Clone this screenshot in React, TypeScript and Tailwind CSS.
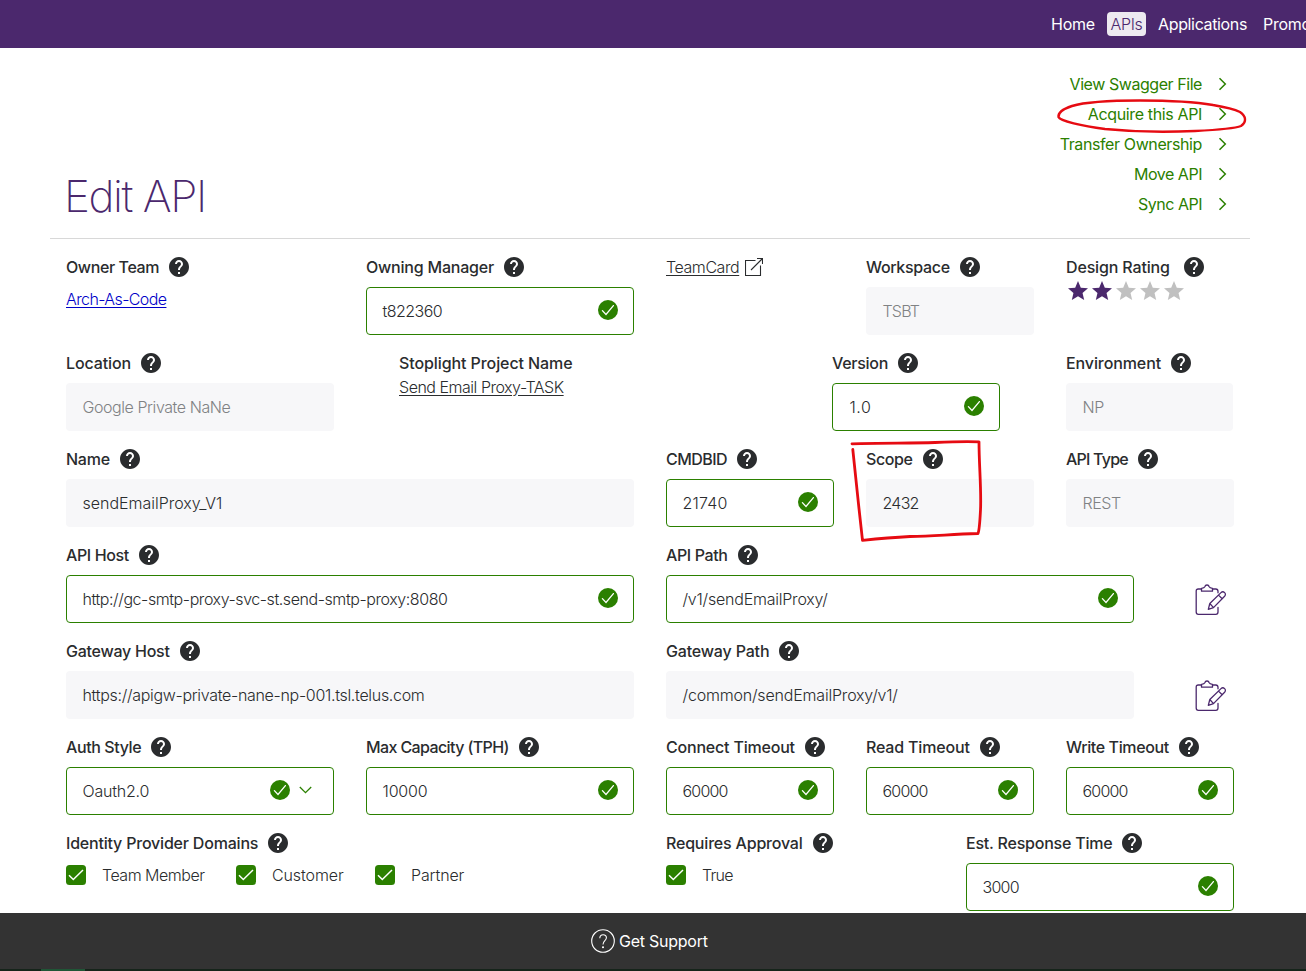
import React from "react";
import { MdHelp, MdStar } from "react-icons/md";

function Help() {
  return <MdHelp className="size-6 shrink-0 text-[#2a2c2e]" />;
}

function CheckCircle() {
  return (
    <svg viewBox="0 0 20 20" className="mb-[3px] size-5 shrink-0">
      <circle cx="10" cy="10" r="10" fill="#2b8000" />
      <path d="M4.400 10.600l3.600 3.800L15.400 5.600" fill="none" stroke="#fff" strokeWidth="1.300" strokeLinecap="round" />
    </svg>
  );
}

function Label({ text, tight = "tracking-[0px]", gap = "gap-2", help = true }: { text: string; tight?: string; gap?: string; help?: boolean }) {
  return (
    <div className={`flex h-6 items-center ${gap} text-base font-medium text-[#2a2c2e]`}>
      <span className={`whitespace-nowrap ${tight}`}>{text}</span>
      {help && <Help />}
    </div>
  );
}

type FieldProps = {
  label: string;
  value: string;
  kind?: "valid" | "plain" | "disabled" | "select";
  labelTight?: string;
  tight?: string;
};

const boxes = {
  valid: "border border-[#2b8000] bg-white text-[#2a2c2e]",
  select: "border border-[#2b8000] bg-white text-[#2a2c2e]",
  plain: "border border-transparent bg-[#f7f7f9] text-[#2a2c2e]",
  disabled: "border border-transparent bg-[#f7f7f9] text-[#808284]",
};

function Field({ label, value, kind = "valid", labelTight, tight = "tracking-[0px]" }: FieldProps) {
  return (
    <div className="flex flex-col gap-2">
      <Label text={label} tight={labelTight} />
      <div className={`flex h-12 items-center justify-between rounded pl-[15.500px] ${kind === "select" ? "pr-[21px]" : "pr-[15px]"} ${boxes[kind]}`}>
        <span className={`whitespace-nowrap font-[270] ${tight}`}>{value}</span>
        {kind === "valid" && <CheckCircle />}
        {kind === "select" && (
          <span className="flex items-center gap-[9px]">
            <CheckCircle />
            <svg viewBox="0 0 13 8" className="mb-[2px] h-2 w-[13px]">
              <path d="M.8 1l5.700 5.600L12.200 1" fill="none" stroke="#2b8000" strokeWidth="1.300" />
            </svg>
          </span>
        )}
      </div>
    </div>
  );
}

function EditIcon() {
  return (
    <div className="flex justify-center pt-[41px]">
      <svg viewBox="0 0 32 32" className="ml-[-9px] mr-[-31px] size-8 shrink-0" fill="none" stroke="#4b286d" strokeWidth="1.300" strokeLinejoin="round" strokeLinecap="round">
        <path d="M6.500 5H3.200C1.900 5 1.200 5.700 1.200 7v21c0 1.600.7 2.300 2.200 2.300h17.400c1.500 0 2.200-.7 2.200-2.300v-4.500M17.500 5h3.200c1.500 0 2.300.8 2.300 2.300v1.500" />
        <path d="M6.500 7.200V4.300c1.800-.2 2.900-.6 3.300-1.600.3-1 1.200-1.700 2.200-1.700s1.900.7 2.200 1.700c.4 1 1.500 1.400 3.300 1.600v2.900z" />
        <path d="M13.300 25.300l1.500-5.800L26 8.600c1.100-1.100 2.600-1 3.600 0s1.100 2.500 0 3.600L18.500 23.600zM14.800 19.500l3.700 4.100M23.500 11.100l3.700 3.700" />
      </svg>
    </div>
  );
}

function Check({ text, tight }: { text: string; tight: string }) {
  return (
    <div className="flex items-center gap-4">
      <svg viewBox="0 0 20 20" className="size-5 shrink-0">
        <rect width="20" height="20" rx="3.500" fill="#2b8000" />
        <path d="M3 10.200l4.300 4.300L17 5" fill="none" stroke="#fff" strokeWidth="1.500" />
      </svg>
      <span className={`whitespace-nowrap font-[270] ${tight}`}>{text}</span>
    </div>
  );
}

const actions = [
  { text: "View Swagger File", tight: "tracking-[-0.44px]" },
  { text: "Acquire this API", tight: "tracking-[-0.36px]" },
  { text: "Transfer Ownership", tight: "tracking-[-0.39px]" },
  { text: "Move API", tight: "tracking-[-0.48px]" },
  { text: "Sync API", tight: "tracking-[-0.5px]" },
];

const row = "grid grid-cols-12 [&>*]:px-4";

export default function App() {
  return (
    <div className="relative flex h-[971px] w-[1306px] flex-col overflow-hidden bg-white font-['Inter','Liberation_Sans',sans-serif] text-base text-[#2a2c2e]">
      <header className="flex h-12 shrink-0 items-center bg-[#4b286d] pl-[1051px] whitespace-nowrap text-white">
        <span className="w-14 shrink-0 tracking-[-0.25px]">Home</span>
        <span className="mr-3 flex h-6 w-[39px] shrink-0 items-center justify-center rounded bg-[#edeaf0] font-light tracking-[-0.3px] text-[#4b286d]">APIs</span>
        <span className="w-[105px] shrink-0 tracking-[-0.35px]">Applications</span>
        <span className="tracking-[-0.3px]">Promotions</span>
      </header>

      <main className="ml-[50px] flex w-[1200px] grow flex-col">
        <div className="flex h-[191px] items-end justify-between border-b border-[#d8d8d8] pr-[23px] pb-[19px] pl-[14px]">
          <h1 className="mb-[-3px] text-[44px] leading-[52px] font-extralight tracking-[-1.450px] text-[#4b286d]">Edit API</h1>
          <nav className="flex flex-col text-[#2b8000]">
            {actions.map((a) => (
              <a key={a.text} className="flex h-[30px] items-center justify-end gap-4 whitespace-nowrap">
                <span className={a.tight}>{a.text}</span>
                <svg viewBox="0 0 9 14" className="h-3.5 w-[9px]" fill="none" stroke="currentColor" strokeWidth="1.500">
                  <path d="M1.500 1.200L7.300 7l-5.800 5.800" />
                </svg>
              </a>
            ))}
          </nav>
        </div>

        <div className="flex flex-col gap-4 pt-4">
          <div className={row}>
            <div className="col-span-3">
              <Label text="Owner Team" tight="tracking-[-0.4px]" />
              <a className="mt-2 block w-fit font-[270] tracking-[-0.6px] text-[#0000c8] underline underline-offset-2">Arch-As-Code</a>
            </div>
            <div className="col-span-3"><Field label="Owning Manager" labelTight="tracking-[-0.21px]" value="t822360" tight="tracking-[-0.55px]" /></div>
            <div className="col-span-2 flex h-6 items-center gap-[6px]">
              <a className="font-[270] tracking-[-0.43px] underline underline-offset-2">TeamCard</a>
              <svg viewBox="0 0 18 18" className="size-[18px]" fill="none" stroke="#2a2c2e" strokeWidth="1.100">
                <path d="M10.500 2.500H.5v15h15V7.500M6 12L17.500.5M12 .5h5.500V6" />
              </svg>
            </div>
            <div className="col-span-2"><Field label="Workspace" labelTight="tracking-[-0.33px]" value="TSBT" tight="tracking-[-0.8px]" kind="disabled" /></div>
            <div className="col-span-2">
              <Label text="Design Rating" tight="tracking-[-0.15px]" gap="gap-3" />
              <div className="flex">
                {[1, 2, 3, 4, 5].map((n) => (
                  <MdStar key={n} className={n <= 2 ? "size-6 text-[#4b286d]" : "size-6 text-[#c0c0c0]"} />
                ))}
              </div>
            </div>
          </div>

          <div className="flex pl-4">
            <div className="w-[268px]"><Field label="Location" labelTight="tracking-[-0.12px]" value="Google Private NaNe" tight="tracking-[-0.43px]" kind="disabled" /></div>
            <div className="ml-[65px] w-[433px]">
              <Label text="Stoplight Project Name" tight="tracking-[-0.09px]" help={false} />
              <a className="block w-fit font-[270] tracking-[-0.48px] underline underline-offset-2">Send Email Proxy-TASK</a>
            </div>
            <div className="w-[168px]"><Field label="Version" labelTight="tracking-[-0.29px]" value="1.0" tight="tracking-[0.5px] pl-px" /></div>
            <div className="ml-[66px] w-[167px]"><Field label="Environment" labelTight="tracking-[-0.1px]" value="NP" tight="tracking-[-0.5px]" kind="disabled" /></div>
          </div>

          <div className={row}>
            <div className="col-span-6"><Field label="Name" labelTight="tracking-[-0.25px]" value="sendEmailProxy_V1" tight="tracking-[-0.02px]" kind="plain" /></div>
            <div className="col-span-2"><Field label="CMDBID" labelTight="tracking-[-0.55px]" value="21740" tight="tracking-[0.2px]" /></div>
            <div className="col-span-2"><Field label="Scope" labelTight="tracking-[-0.4px]" value="2432" tight="tracking-[-0.75px]" kind="plain" /></div>
            <div className="col-span-2"><Field label="API Type" labelTight="tracking-[-0.78px]" value="REST" tight="tracking-[-0.4px]" kind="disabled" /></div>
          </div>

          <div className={row}>
            <div className="col-span-6"><Field label="API Host" labelTight="tracking-[-0.38px]" value="http://gc-smtp-proxy-svc-st.send-smtp-proxy:8080" tight="tracking-[-0.43px]" /></div>
            <div className="col-span-5"><Field label="API Path" labelTight="tracking-[-0.38px]" value="/v1/sendEmailProxy/" tight="tracking-[-0.22px]" /></div>
            <EditIcon />
          </div>

          <div className={row}>
            <div className="col-span-6"><Field label="Gateway Host" labelTight="tracking-[-0.25px]" value="https://apigw-private-nane-np-001.tsl.telus.com" tight="tracking-[-0.31px]" kind="plain" /></div>
            <div className="col-span-5"><Field label="Gateway Path" labelTight="tracking-[-0.17px]" value="/common/sendEmailProxy/v1/" tight="tracking-[-0.19px]" kind="plain" /></div>
            <EditIcon />
          </div>

          <div className={row}>
            <div className="col-span-3"><Field label="Auth Style" labelTight="tracking-[-0.4px]" value="Oauth2.0" tight="tracking-[-0.22px]" kind="select" /></div>
            <div className="col-span-3"><Field label="Max Capacity (TPH)" labelTight="tracking-[-0.61px]" value="10000" tight="tracking-[-0.17px]" /></div>
            <div className="col-span-2"><Field label="Connect Timeout" labelTight="tracking-[-0.2px]" value="60000" tight="tracking-[-0.8px]" /></div>
            <div className="col-span-2"><Field label="Read Timeout" labelTight="tracking-[-0.17px]" value="60000" tight="tracking-[-0.8px]" /></div>
            <div className="col-span-2"><Field label="Write Timeout" labelTight="tracking-[-0.38px]" value="60000" tight="tracking-[-0.8px]" /></div>
          </div>

          <div className={row}>
            <div className="col-span-6">
              <Label text="Identity Provider Domains" tight="tracking-[-0.2px]" />
              <div className="mt-2 flex">
                <div className="w-[170px]"><Check text="Team Member" tight="tracking-[-0.5px]" /></div>
                <div className="w-[139px]"><Check text="Customer" tight="tracking-[-0.1px]" /></div>
                <Check text="Partner" tight="tracking-[-0.12px]" />
              </div>
            </div>
            <div className="col-span-3">
              <Label text="Requires Approval" tight="tracking-[-0.19px]" />
              <div className="mt-2"><Check text="True" tight="tracking-[-0.7px]" /></div>
            </div>
            <div className="col-span-3"><Field label="Est. Response Time" labelTight="tracking-[-0.22px]" value="3000" tight="tracking-[-0.75px]" /></div>
          </div>
        </div>
      </main>

      <footer className="flex h-[58px] shrink-0 flex-col bg-[#333333] text-white">
        <div className="flex h-14 items-center gap-1 pl-[591px]">
          <svg viewBox="0 0 24 24" className="size-6" fill="none" stroke="#fff" strokeWidth="1.100">
            <circle cx="12" cy="12" r="11.300" />
            <path d="M8.800 9.300c0-2.300 1.300-3.600 3.300-3.600s3.300 1.200 3.300 3.100c0 2.900-3.400 2.900-3.400 6.700" />
            <circle cx="12" cy="18.300" r=".5" fill="#fff" />
          </svg>
          <span className="tracking-[-0.25px]">Get Support</span>
        </div>
        <div className="flex h-0.5 bg-[#15241a] pl-[41px]"><div className="w-11 bg-[#1f5636]" /></div>
      </footer>

      <svg viewBox="0 0 1306 971" className="pointer-events-none absolute inset-0 size-full" fill="none" stroke="#e60b12" strokeLinecap="round" strokeLinejoin="round">
        <path strokeWidth="2.400" d="M1213 105C1190 101 1165 100.500 1140 100.500C1110 100.500 1085 102 1072 106C1063 109 1058 113 1058.500 117C1060 121 1082 126 1105 129C1135 132 1165 132.500 1195 131C1215 130 1235 128.500 1241 126C1247 122 1246 116 1240 112C1234 109 1222 106.500 1213 105" />
        <path strokeWidth="2.800" d="M852 443.800C880 442.500 910 443.500 935 442.500C955 441.500 970 441.300 979 441.800C979 465 981.500 490 980.500 510C980 520 979.500 530 978 533.500C950 534 935 536.500 910 536.500C890 537.500 875 539 862.500 540.300C859 510 856 480 852.800 449.500" />
      </svg>
    </div>
  );
}
